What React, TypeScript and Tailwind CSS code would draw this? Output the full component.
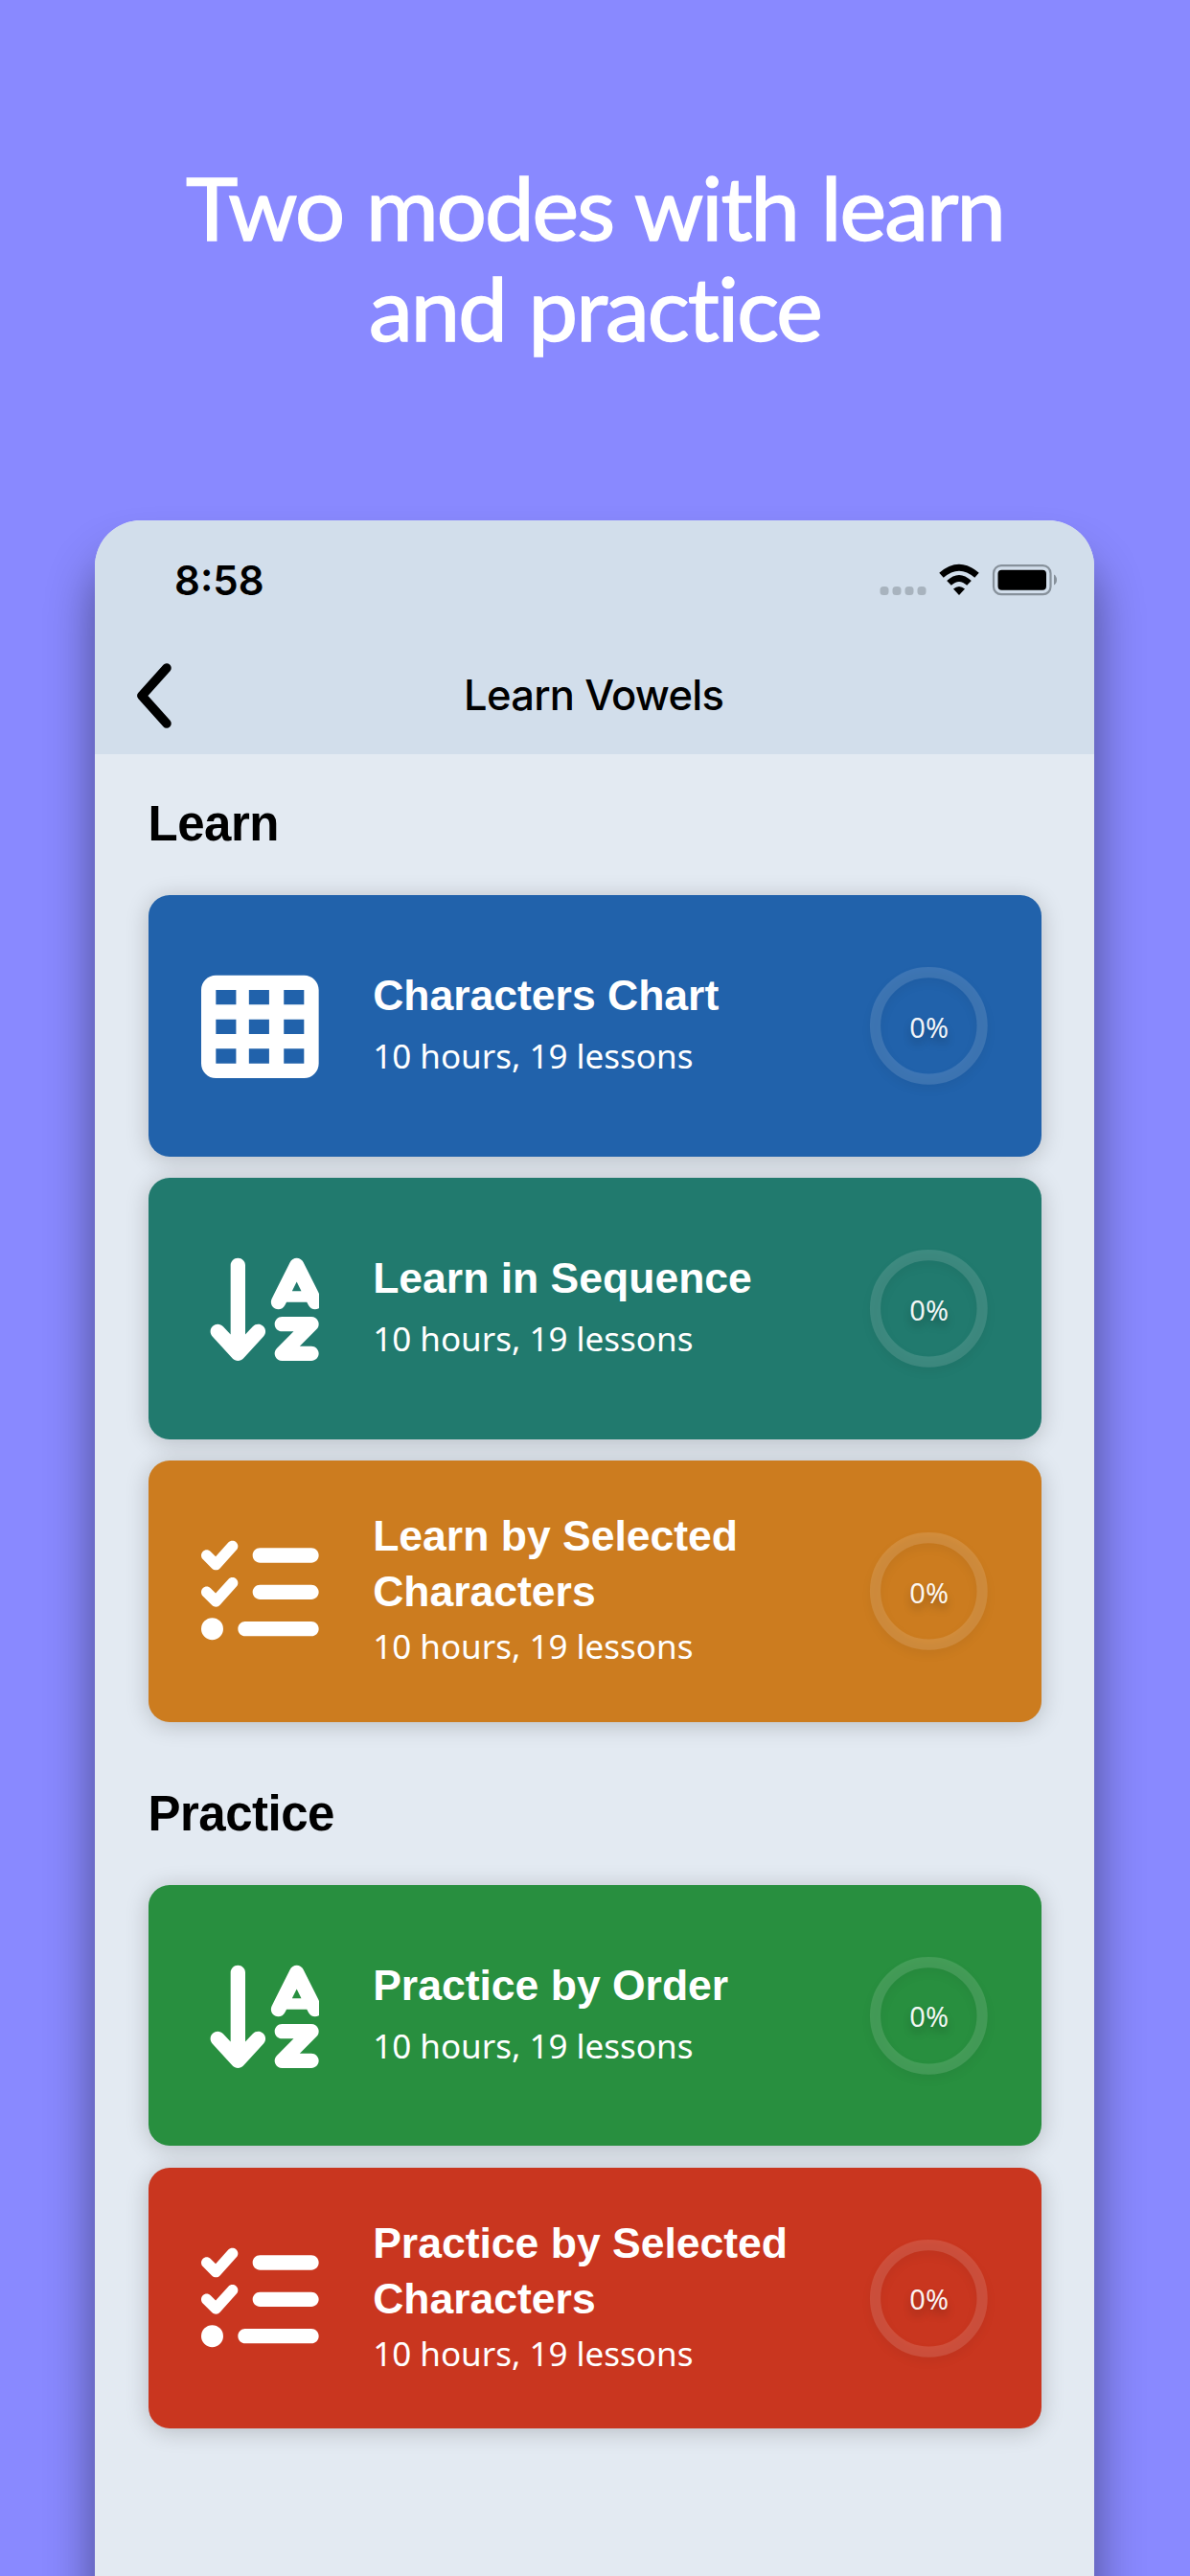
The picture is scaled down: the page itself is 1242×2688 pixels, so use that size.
import type { ReactNode } from "react";
import { FaTableCells, FaArrowDownAZ, FaListCheck } from "react-icons/fa6";

const tableIcon = <FaTableCells className="block h-[122.67px] w-[122.67px]" />;
const sortIcon = <FaArrowDownAZ className="block h-[122.67px] w-[138px] max-w-none" />;
const checksIcon = <FaListCheck className="block h-[122.67px] w-[122.67px]" />;

function ProgressRing() {
  return (
    <div className="relative h-[122.67px] w-[122.67px]">
      <svg className="block h-full w-full overflow-visible" viewBox="0 0 122.67 122.67" fill="none">
        <circle cx="61.33" cy="61.33" r="55.8" stroke="white" strokeOpacity="0.13" strokeWidth="11.2" className="drop-shadow-[0_5px_5px_rgba(0,0,0,0.35)]" />
      </svg>
      <span className="absolute inset-0 flex items-center justify-center pt-[2px] font-['Noto_Sans',sans-serif] text-[29px] leading-none text-white/95 [text-shadow:0_6px_8px_rgba(0,0,0,0.25)]">0%</span>
    </div>
  );
}

function Card({ color, icon, lines }: { color: string; icon: ReactNode; lines: string[] }) {
  return (
    <div className={`flex h-[272.6px] items-center rounded-[22px] pl-[55.5px] pr-[55.5px] shadow-[0_3px_24px_rgba(0,0,0,0.2)] ${color}`}>
      <div className="mt-[2px] w-[122.67px] shrink-0 overflow-hidden text-white">{icon}</div>
      <div className="ml-[56.5px] grow text-white">
        <div className="-mt-[2px] mb-[2px]">
          {lines.map((line) => (
            <div key={line} className="h-[58px] whitespace-nowrap font-['Liberation_Sans',sans-serif] text-[44.5px] font-bold leading-[58px]">{line}</div>
          ))}
        </div>
        <div className={`font-['Noto_Sans',sans-serif] text-[35px] leading-[52px] ${lines.length === 1 ? "mt-[8px]" : ""}`}>10 hours, 19 lessons</div>
      </div>
      <ProgressRing />
    </div>
  );
}

function Heading({ children }: { children: ReactNode }) {
  return <h2 className="h-[60px] font-['Liberation_Sans',sans-serif] text-[51px] font-bold leading-[60px] tracking-[-0.5px] text-black">{children}</h2>;
}

export default function App() {
  return (
    <div className="flex h-[2688px] w-[1242px] flex-col overflow-hidden bg-[#8989ff]">
      <h1 className="h-[543px] shrink-0 whitespace-nowrap pt-[163px] text-center font-['Lato',sans-serif] text-[92px] leading-[105px] tracking-[-1.9px] text-white [-webkit-text-stroke:1.5px_white] [word-spacing:2px]">
        Two modes with learn
        <br />
        and practice
      </h1>
      <main className="ml-[99px] h-[2300px] w-[1043px] shrink-0 rounded-t-[48px] bg-[#e3eaf2] shadow-[0_40px_50px_rgba(0,0,0,0.45)]">
        <header className="h-[244px] rounded-t-[48px] bg-[#d2deeb]">
          <div className="flex h-[124px] items-center justify-between pl-[83px] pr-[38px]">
            <span className="pt-[2px] font-['Inter',sans-serif] text-[42px] font-semibold leading-none text-black">8:58</span>
            <div className="flex items-center">
              <svg width="186" height="34" viewBox="0 0 186 34" className="block">
                <g fill="#a8b3be">
                  <rect x="0.5" y="24" width="9" height="9" rx="3.5" />
                  <rect x="13.5" y="24" width="9" height="9" rx="3.5" />
                  <rect x="26.5" y="24" width="9" height="9" rx="3.5" />
                  <rect x="39.5" y="24" width="9" height="9" rx="3.5" />
                </g>
                <g fill="none" stroke="black" strokeWidth="6.8">
                  <path d="M64.5 12.3Q83 -3.8 101.5 12.3" />
                  <path d="M72.5 20.4Q83 10.5 93.5 20.4" />
                </g>
                <path d="M77 26.5Q83 21.5 89 26.5L83 33Z" fill="black" />
                <rect x="119" y="2.2" width="59.5" height="30" rx="8" fill="none" stroke="#87919b" strokeWidth="2.2" />
                <rect x="123.5" y="6.8" width="50.5" height="21" rx="4" fill="black" />
                <path d="M182 11.5Q185 13.5 185 17Q185 20.5 182 22.5Z" fill="#87919b" />
              </svg>
            </div>
          </div>
          <div className="flex h-[117px] items-center">
            <svg width="38" height="70" viewBox="0 0 38 70" className="ml-[43px] block" fill="none">
              <path d="M32 6L6 35L32 64" stroke="black" strokeWidth="9.5" strokeLinecap="round" strokeLinejoin="round" />
            </svg>
            <h3 className="ml-[304px] whitespace-nowrap font-['Inter',sans-serif] text-[43.5px] font-medium leading-none tracking-[-0.7px] text-black">Learn Vowels</h3>
          </div>
        </header>
        <div className="px-[55.5px]">
          <div className="pt-[43px]"><Heading>Learn</Heading></div>
          <div className="mt-[44px] flex flex-col gap-[22.4px]">
            <Card color="bg-[#2162ab]" icon={tableIcon} lines={["Characters Chart"]} />
            <Card color="bg-[#217a6e]" icon={sortIcon} lines={["Learn in Sequence"]} />
            <Card color="bg-[#cc7c1f]" icon={checksIcon} lines={["Learn by Selected", "Characters"]} />
          </div>
          <div className="pt-[66px]"><Heading>Practice</Heading></div>
          <div className="mt-[44px] flex flex-col gap-[22.4px]">
            <Card color="bg-[#288f3f]" icon={sortIcon} lines={["Practice by Order"]} />
            <Card color="bg-[#c9361f]" icon={checksIcon} lines={["Practice by Selected", "Characters"]} />
          </div>
        </div>
      </main>
    </div>
  );
}
